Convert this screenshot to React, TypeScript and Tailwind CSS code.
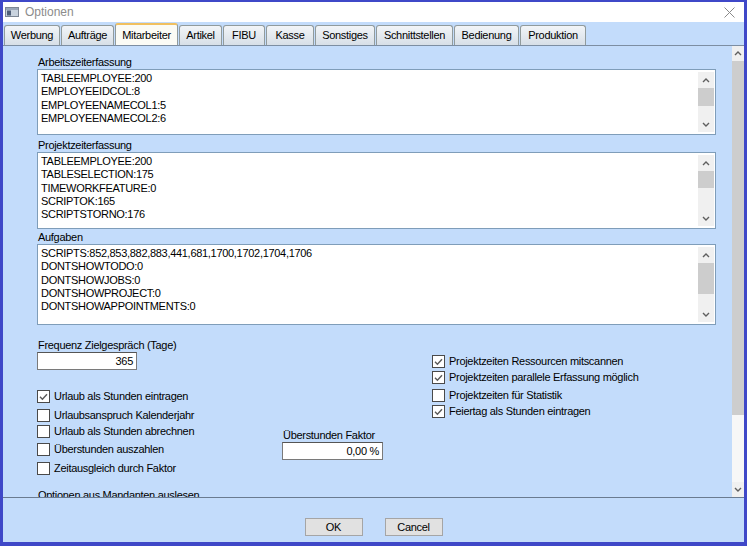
const FONT = "font-['Liberation_Sans',Arial,sans-serif] text-[11px] leading-[13px] tracking-[-0.3px] text-black";

const tabs = [
  { label: 'Werbung', w: 'w-[56px]' },
  { label: 'Aufträge', w: 'w-[53px]' },
  { label: 'Mitarbeiter', w: 'w-[63px]', active: true },
  { label: 'Artikel', w: 'w-[43px]' },
  { label: 'FIBU', w: 'w-[42px]' },
  { label: 'Kasse', w: 'w-[48px]' },
  { label: 'Sonstiges', w: 'w-[60px]' },
  { label: 'Schnittstellen', w: 'w-[77px]' },
  { label: 'Bedienung', w: 'w-[65px]' },
  { label: 'Produktion', w: 'w-[66px]' },
];

const Chevron = ({ down }: { down?: boolean }) => (
  <svg width="8" height="5" viewBox="0 0 8 5" className={down ? 'rotate-180' : ''}>
    <path d="M1 4 L4 1 L7 4" fill="none" stroke="#5f5f5f" strokeWidth="1.4" />
  </svg>
);

interface MemoProps {
  lines: string[];
  box: string;
  thumb: string;
}

const Memo = ({ lines, box, thumb }: MemoProps) => (
  <div className={`ml-[34px] mr-[16px] flex border border-[#7f9db9] bg-white ${box}`}>
    <div className="flex-1 overflow-hidden pl-[3px] pt-[2px]">
      {lines.map((l) => (
        <div key={l} className="leading-[13.33px] whitespace-nowrap">{l}</div>
      ))}
    </div>
    <div className="my-[2px] mr-[1px] flex w-[16px] flex-col bg-[#f0f0f0]">
      <div className="flex h-[16px] items-center justify-center"><Chevron /></div>
      <div className={`bg-[#cdcdcd] ${thumb}`} />
      <div className="flex-1" />
      <div className="flex h-[16px] items-center justify-center"><Chevron down /></div>
    </div>
  </div>
);

const Check = ({ label, checked, className = '' }: { label: string; checked?: boolean; className?: string }) => (
  <div className={`flex h-[13px] items-center ${className}`}>
    <span className="flex h-[13px] w-[13px] shrink-0 items-center justify-center border border-[#4a4a4a] bg-white">
      {checked && (
        <svg width="9" height="8" viewBox="0 0 9 8">
          <path d="M1 3.8 L3.4 6.2 L8 1.2" fill="none" stroke="#5a5a5a" strokeWidth="1.4" />
        </svg>
      )}
    </span>
    <span className="ml-[4px] whitespace-nowrap">{label}</span>
  </div>
);

const NumBox = ({ value, w }: { value: string; w: string }) => (
  <div className={`flex h-[18px] items-center justify-end border border-[#7a7a7a] border-t-[#555] bg-white pr-[3px] ${w}`}>
    {value}
  </div>
);

export default function App() {
  return (
    <div className={`flex h-[546px] w-[747px] flex-col overflow-hidden bg-[#3f48c8] px-[3px] pt-[2px] pb-[4px] ${FONT}`}>
      {/* title */}
      <div className="flex h-[20px] items-center bg-white">
        <svg width="14" height="10" viewBox="0 0 14 10" className="ml-[2px]">
          <rect x="0.5" y="0.5" width="13" height="9" fill="#c9d3de" stroke="#7d8794" />
          <rect x="1" y="1" width="12" height="2" fill="#9aa7b8" />
          <rect x="2" y="3.5" width="4" height="5" fill="#4f5f78" />
        </svg>
        <span className="ml-[6px] text-[12px] tracking-normal text-[#8c8c8c]">Optionen</span>
        <div className="flex-1" />
        <svg width="11" height="11" viewBox="0 0 11 11" className="mr-[9px]">
          <path d="M0.5 0.5 L10.5 10.5 M10.5 0.5 L0.5 10.5" stroke="#8a8a8a" strokeWidth="1" />
        </svg>
      </div>

      {/* tabs */}
      <div className="flex h-[23px] items-end gap-[1px] bg-[#c3dcfb] pl-[1px]">
        {tabs.map((t) => (
          <div
            key={t.label}
            className={
              t.active
                ? `flex h-[22px] items-center justify-center rounded-t-[3px] border border-b-0 border-[#919b9c] border-t-2 border-t-[#f0c060] bg-[#fbfbf5] ${t.w}`
                : `flex h-[20px] items-center justify-center rounded-t-[3px] border border-b-0 border-[#919b9c] bg-gradient-to-b from-[#f2f5f8] to-[#d7dfe7] ${t.w}`
            }
          >
            {t.label}
          </div>
        ))}
      </div>
      <div className="h-[1px] bg-[#7d8ea2]" />

      {/* scroll content */}
      <div className="flex h-[451px] bg-[#c3dcfb]">
        <div className="flex-1 overflow-hidden">
          <div className="ml-[35px] mt-[10px] h-[13px]">Arbeitszeiterfassung</div>
          <Memo
            box="h-[66px]"
            thumb="h-[18px]"
            lines={['TABLEEMPLOYEE:200', 'EMPLOYEEIDCOL:8', 'EMPLOYEENAMECOL1:5', 'EMPLOYEENAMECOL2:6']}
          />
          <div className="ml-[35px] mt-[4px] h-[13px]">Projektzeiterfassung</div>
          <Memo
            box="h-[77px]"
            thumb="h-[17px]"
            lines={['TABLEEMPLOYEE:200', 'TABLESELECTION:175', 'TIMEWORKFEATURE:0', 'SCRIPTOK:165', 'SCRIPTSTORNO:176']}
          />
          <div className="ml-[35px] mt-[2px] h-[13px]">Aufgaben</div>
          <Memo
            box="h-[81px]"
            thumb="h-[31px]"
            lines={[
              'SCRIPTS:852,853,882,883,441,681,1700,1702,1704,1706',
              'DONTSHOWTODO:0',
              'DONTSHOWJOBS:0',
              'DONTSHOWPROJECT:0',
              'DONTSHOWAPPOINTMENTS:0',
            ]}
          />

          <div className="ml-[34px] flex">
            <div className="w-[245px]">
              <div className="ml-[1px] mt-[14px] h-[13px]">Frequenz Zielgespräch (Tage)</div>
              <NumBox value="365" w="w-[100px]" />
              <Check className="mt-[20px]" checked label="Urlaub als Stunden eintragen" />
              <Check className="mt-[6px]" label="Urlaubsanspruch Kalenderjahr" />
              <Check className="mt-[3px]" label="Urlaub als Stunden abrechnen" />
              <Check className="mt-[5px]" label="Überstunden auszahlen" />
              <Check className="mt-[6px]" label="Zeitausgleich durch Faktor" />
              <div className="ml-[1px] mt-[14px] h-[13px] whitespace-nowrap">Optionen aus Mandanten auslesen</div>
            </div>
            <div className="w-[150px]">
              <div className="ml-[1px] mt-[104px] h-[13px]">Überstunden Faktor</div>
              <NumBox value="0,00 %" w="w-[101px]" />
            </div>
            <div className="flex-1">
              <Check className="mt-[30px]" checked label="Projektzeiten Ressourcen mitscannen" />
              <Check className="mt-[3px]" checked label="Projektzeiten parallele Erfassung möglich" />
              <Check className="mt-[5px]" label="Projektzeiten für Statistik" />
              <Check className="mt-[3px]" checked label="Feiertag als Stunden eintragen" />
            </div>
          </div>
        </div>

        {/* page scrollbar */}
        <div className="flex w-[12px] flex-col bg-[#f7f7f7]">
          <div className="flex h-[15px] items-center justify-center bg-[#f0f0f0]"><Chevron /></div>
          <div className="h-[354px] bg-[#cdcdcd]" />
          <div className="flex-1" />
          <div className="flex h-[15px] items-center justify-center bg-[#f0f0f0]"><Chevron down /></div>
        </div>
      </div>
      <div className="h-[1px] bg-[#6a7b90]" />

      {/* buttons */}
      <div className="flex flex-1 justify-center gap-[22px] bg-[#c3dcfb] pt-[20px]">
        <button type="button" className="flex h-[18px] w-[58px] items-center justify-center border border-[#a5a5a5] bg-[#e1e1e1]">
          OK
        </button>
        <button type="button" className="flex h-[18px] w-[58px] items-center justify-center border border-[#a5a5a5] bg-[#e1e1e1]">
          Cancel
        </button>
      </div>
    </div>
  );
}
